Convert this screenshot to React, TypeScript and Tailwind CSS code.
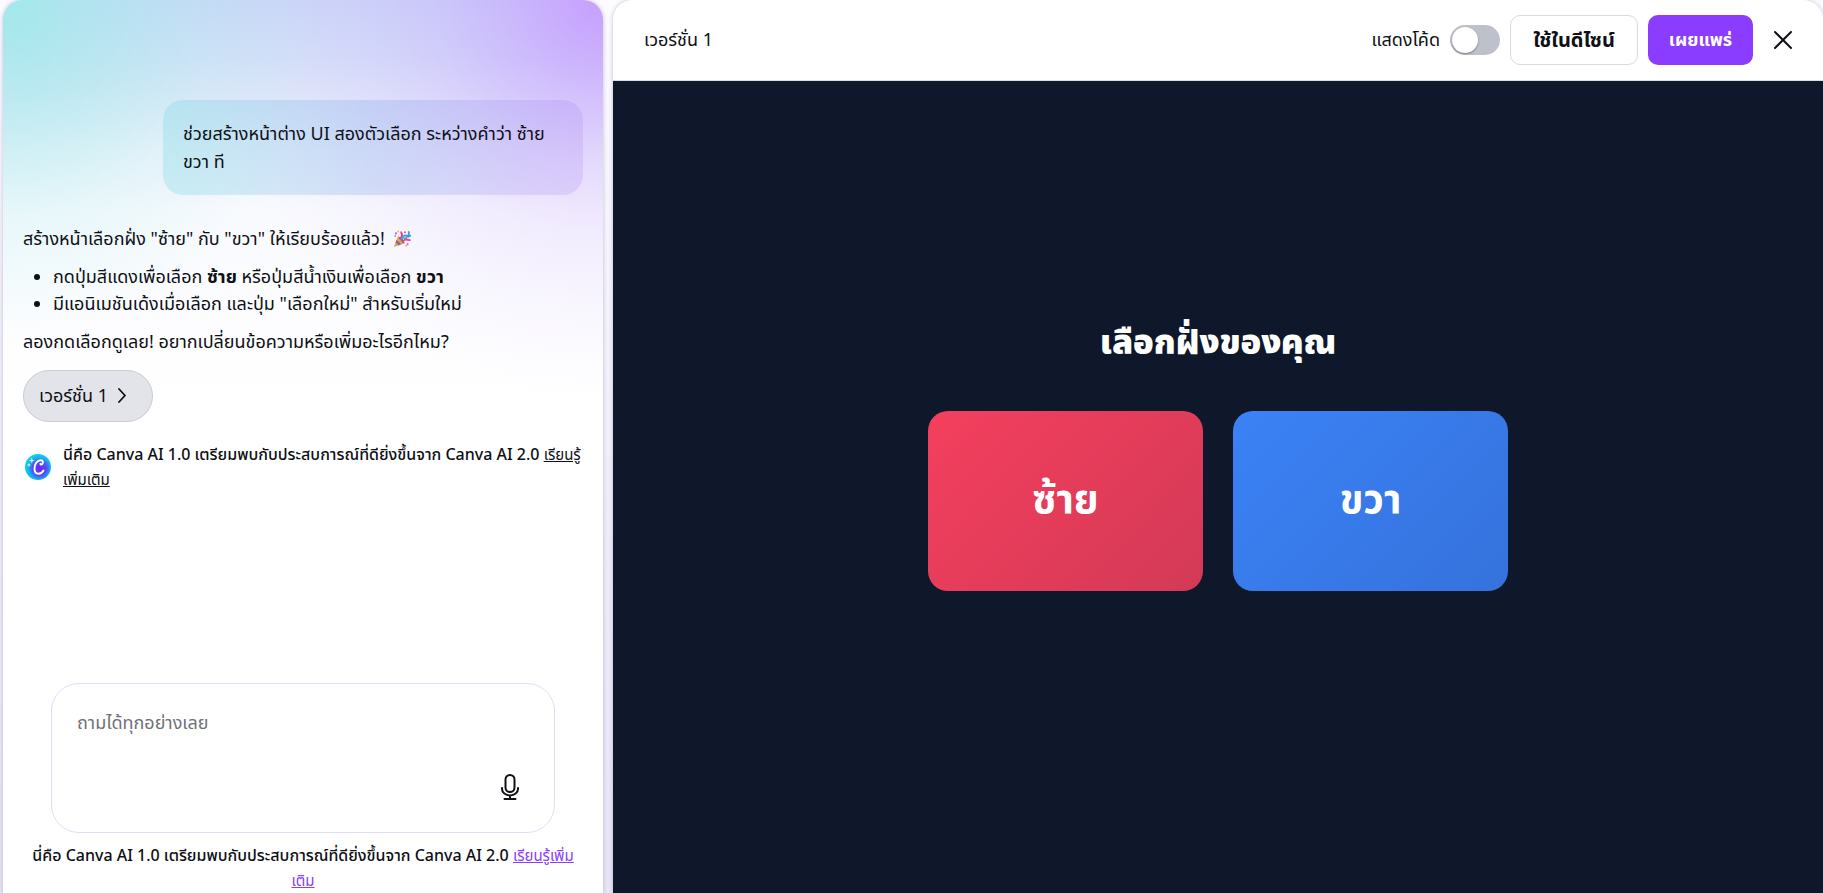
import { useState } from "react";

function PartyPopper() {
  return (
    <svg viewBox="0 0 24 24" className="ml-1 inline-block size-[18px] align-[-3px]" role="img" aria-label="🎉">
      <path d="M1 22.5 6.5 8.5Q13 10 15.500 17.500Z" fill="#e8a33d" />
      <path d="M4.500 13.500Q9 15 10.500 19.300L7 20.500Q6.500 17.500 3.400 16.500ZM6.500 8.500Q8 10 8.300 11.300L13.500 17.800 15.500 17.500Q13.500 10.500 6.500 8.500Z" fill="#8b5fa8" />
      <path d="M9.500 11Q14 8 10.800 3M13.500 15Q15 11.500 22.500 13.500" fill="none" stroke="#f03a90" strokeWidth="2.400" strokeLinecap="round" />
      <path d="M12 12.500Q14 6 18 7.500T21 2.500M15.500 11.500 23 7.500" fill="none" stroke="#3f9be0" strokeWidth="2.400" strokeLinecap="round" />
      <g fill="#f0509a"><circle cx="4" cy="4.500" r="1.400" /><circle cx="16" cy="3" r="1.400" /><circle cx="19.500" cy="19" r="1.400" /></g>
      <g fill="#f6b73c"><circle cx="7" cy="2" r="1.300" /><circle cx="19.500" cy="10.500" r="1.100" /><circle cx="17.500" cy="21" r="1.200" /></g>
      <circle cx="3" cy="8" r="1.200" fill="#58b4e8" />
    </svg>
  );
}

function CanvaLogo() {
  return (
    <svg viewBox="0 0 26 26" className="size-[26px] shrink-0" aria-hidden="true">
      <defs>
        <radialGradient id="logo-fill" cx="0.56" cy="0.56" r="0.56">
          <stop offset="0.15" stopColor="#6a2cf5" />
          <stop offset="0.5" stopColor="#4f55f2" />
          <stop offset="0.78" stopColor="#12b9ee" />
          <stop offset="1" stopColor="#08d4e2" />
        </radialGradient>
      </defs>
      <circle cx="13" cy="13" r="13" fill="url(#logo-fill)" />
      <path d="M15.500 9.800c.1 1.200 1.600 1 2.200-.4.800-2-.500-3.400-2.500-3.200-3.400.3-5.700 4.300-5.700 8.200 0 3.300 1.600 5.300 4 5.300 2 0 3.900-1.200 5-3.200" fill="none" stroke="#fff" strokeWidth="1.900" strokeLinecap="round" />
      <path d="M6.800 3.600 7.500 5.900 9.800 6.600 7.500 7.300 6.800 9.600 6.100 7.300 3.800 6.600 6.100 5.900ZM4 8.800 4.500 10.400 6.100 10.900 4.500 11.400 4 13 3.500 11.400 1.900 10.900 3.500 10.400Z" fill="#fff" />
    </svg>
  );
}

function MicIcon() {
  return (
    <svg viewBox="0 0 30 30" className="size-[30px]" fill="none" stroke="currentColor" strokeWidth="2" strokeLinecap="round" strokeLinejoin="round" aria-hidden="true">
      <rect x="10.500" y="2" width="9" height="17" rx="4.500" />
      <path d="M7 15v1a8 6.500 0 0 0 16 0v-1M15 22.500V26M9.500 26h11" />
    </svg>
  );
}

function VersionNotice({ label, linkClass }: { label: string; linkClass: string }) {
  return (
    <p className="text-base leading-[25px] font-medium">
      นี่คือ Canva AI 1.0 เตรียมพบกับประสบการณ์ที่ดียิ่งขึ้นจาก Canva AI 2.0{" "}
      <a href="#learn-more" className={linkClass}>{label}</a>
    </p>
  );
}

function ChatPanel() {
  return (
    <aside className="relative isolate flex w-[600px] shrink-0 flex-col overflow-hidden rounded-t-[20px] bg-white shadow-[0_0_4px_rgba(60,50,110,0.3)]">
      <div
        aria-hidden="true"
        className="absolute inset-x-0 top-0 -z-10 h-[480px] bg-[radial-gradient(ellipse_320px_340px_at_0%_0%,rgba(158,235,233,0.95)_0%,rgba(158,235,233,0.65)_20%,rgba(158,235,233,0.38)_45%,rgba(158,235,233,0.18)_65%,rgba(158,235,233,0)_100%),radial-gradient(ellipse_400px_400px_at_100%_0%,#c79fff_0%,rgba(199,159,255,0.75)_13%,rgba(199,159,255,0.52)_26%,rgba(199,159,255,0.3)_42%,rgba(199,159,255,0.15)_60%,rgba(199,159,255,0.05)_80%,rgba(199,159,255,0)_100%),linear-gradient(180deg,#ccd8f8_0%,#d6e1f9_60px,#e2e9fa_100px,#eff3fc_150px,#f9fafe_210px,#ffffff_400px)]"
      />
      <div className="flex flex-1 flex-col pt-[100px] pr-4 pl-5">
        <div className="mr-1 ml-auto w-[420px] rounded-[20px] bg-linear-to-r from-[#5ed0dc]/25 via-[#6f9ce8]/25 to-[#a076f0]/20 px-5 pt-[19px] pb-5 text-lg leading-7">
          ช่วยสร้างหน้าต่าง UI สองตัวเลือก ระหว่างคำว่า ซ้าย ขวา ที
        </div>
        <div className="mt-[30px] text-lg leading-[27px]">
          <p>สร้างหน้าเลือกฝั่ง "ซ้าย" กับ "ขวา" ให้เรียบร้อยแล้ว! <PartyPopper /></p>
          <ul className="my-[11px] list-disc pl-[30px]">
            <li>กดปุ่มสีแดงเพื่อเลือก <strong>ซ้าย</strong> หรือปุ่มสีน้ำเงินเพื่อเลือก <strong>ขวา</strong></li>
            <li>มีแอนิเมชันเด้งเมื่อเลือก และปุ่ม "เลือกใหม่" สำหรับเริ่มใหม่</li>
          </ul>
          <p>ลองกดเลือกดูเลย! อยากเปลี่ยนข้อความหรือเพิ่มอะไรอีกไหม?</p>
        </div>
        <button type="button" className="mt-[15px] flex h-[52px] w-[130px] items-center gap-1.5 rounded-full border border-[#c9ccd3] bg-[#e2e4e9] pb-0.5 pl-[15px] text-lg">
          เวอร์ชั่น 1
          <svg viewBox="0 0 16 16" className="size-4" fill="none" stroke="currentColor" strokeWidth="1.800" strokeLinecap="round" strokeLinejoin="round" aria-hidden="true">
            <path d="m5 2 6 6.500-6 6.500" />
          </svg>
        </button>
        <div className="mt-5 flex items-center gap-3 pl-[2px]">
          <CanvaLogo />
          <VersionNotice label="เรียนรู้เพิ่มเติม" linkClass="text-[15px] font-normal underline" />
        </div>
      </div>
      <form className="mx-12 flex h-[150px] flex-col rounded-[28px] border border-[#e1dcfb] bg-white" onSubmit={(e) => e.preventDefault()}>
        <textarea
          aria-label="ข้อความ"
          placeholder="ถามได้ทุกอย่างเลย"
          className="w-full flex-1 resize-none bg-transparent px-[25px] pt-6 text-lg leading-7 outline-none placeholder:text-[#6f7178]"
        />
        <button type="button" aria-label="ไมโครโฟน" className="mr-[29px] mb-[29px] self-end">
          <MicIcon />
        </button>
      </form>
      <div className="px-6 pt-[10px] text-center">
        <VersionNotice label="เรียนรู้เพิ่มเติม" linkClass="text-[15px] font-normal text-[#8b3dff] underline" />
      </div>
    </aside>
  );
}

function Toolbar() {
  const [showCode, setShowCode] = useState(false);
  return (
    <header className="flex h-[81px] items-center rounded-t-[20px] border-b border-[#d9dce3] bg-white pr-[25px] pl-[31px] text-lg">
      <h1 className="pb-0.5">เวอร์ชั่น 1</h1>
      <div className="ml-auto flex items-center gap-[10px]">
        <label className="flex cursor-pointer items-center gap-[10px]">
          <span className="pb-0.5">แสดงโค้ด</span>
          <input
            type="checkbox"
            checked={showCode}
            onChange={(e) => setShowCode(e.target.checked)}
            className="h-[30px] w-[50px] appearance-none rounded-full bg-[#bdc1c9] p-[2px] before:block before:size-[26px] before:rounded-full before:bg-white before:shadow-[0_1px_2px_rgba(30,40,60,0.45)] checked:bg-[#8b3dff] checked:before:ml-5"
          />
        </label>
        <button type="button" className="h-[50px] w-32 rounded-[10px] border border-[#d9dbe0] text-[20px] font-bold">ใช้ในดีไซน์</button>
        <button type="button" className="h-[50px] w-[105px] rounded-[10px] bg-[#8b3dff] pb-0.5 font-bold text-white">เผยแพร่</button>
        <button type="button" aria-label="ปิด" className="ml-[5px] flex size-[30px] items-center justify-center">
          <svg viewBox="0 0 20 20" className="size-5" fill="none" stroke="currentColor" strokeWidth="2" strokeLinecap="round" aria-hidden="true">
            <path d="m2 2 16 16M18 2 2 18" />
          </svg>
        </button>
      </div>
    </header>
  );
}

function Preview() {
  return (
    <main className="flex min-w-0 flex-1 flex-col rounded-t-[20px] shadow-[0_0_4px_rgba(60,50,110,0.3)]">
      <Toolbar />
      <section className="flex flex-1 flex-col items-center justify-center gap-[42px] bg-[#0f172a] pb-[70px] text-white">
        <h2 className="text-[34px] leading-[56px] font-black">เลือกฝั่งของคุณ</h2>
        <div className="flex gap-[30px]">
          <button type="button" className="h-[180px] w-[275px] rounded-[20px] bg-linear-135 from-[#f43f5e] to-[#d33a56] pb-1.5 text-[40px] font-bold">ซ้าย</button>
          <button type="button" className="h-[180px] w-[275px] rounded-[20px] bg-linear-135 from-[#3b82f6] to-[#3572dc] pb-1.5 text-[40px] font-bold">ขวา</button>
        </div>
      </section>
    </main>
  );
}

export default function App() {
  return (
    <div className="flex min-h-screen gap-[10px] bg-linear-to-b from-[#fcfbfe] to-[#e9e5f7] pl-[3px] font-['Noto_Sans','Noto_Sans_Thai',sans-serif] text-[#0e1015]">
      <ChatPanel />
      <Preview />
    </div>
  );
}
